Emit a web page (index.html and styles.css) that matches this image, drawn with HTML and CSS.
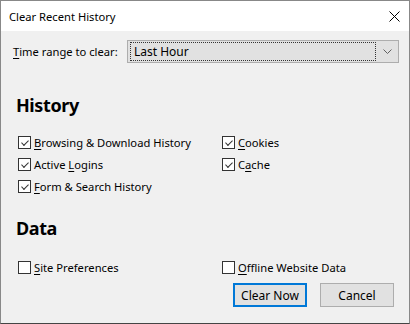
FILE: index.html
```html
<!DOCTYPE html>
<html lang="en">
<head>
    <meta charset="UTF-8">
    <title>Clear Recent History</title>
    <link rel="stylesheet" href="styles.css">
</head>
<body>
    <div class="dialog">
        <div class="titlebar">
            <span class="title">Clear Recent History</span>
            <svg class="close" width="11" height="11" viewBox="0 0 11 11">
                <path d="M0.5 0.5 L10.5 10.5 M10.5 0.5 L0.5 10.5" stroke="#000" stroke-width="1" fill="none"/>
            </svg>
        </div>

        <div class="content">
            <div class="range-row">
                <label class="range-label"><u>T</u>ime range to clear:</label>
                <div class="select">
                    <div class="select-focus">Last Hour</div>
                    <svg class="arrow" width="9" height="5" viewBox="0 0 9 5">
                        <path d="M0.5 0.5 L4.5 4.5 L8.5 0.5" stroke="#606060" stroke-width="1" fill="none"/>
                    </svg>
                </div>
            </div>

            <h2 class="section-title">History</h2>
            <div class="options">
                <div class="option"><span class="box checked"></span><span><u>B</u>rowsing &amp; Download History</span></div>
                <div class="option"><span class="box checked"></span><span><u>C</u>ookies</span></div>
                <div class="option"><span class="box checked"></span><span>Active <u>L</u>ogins</span></div>
                <div class="option"><span class="box checked"></span><span>C<u>a</u>che</span></div>
                <div class="option"><span class="box checked"></span><span><u>F</u>orm &amp; Search History</span></div>
            </div>

            <h2 class="section-title data-title">Data</h2>
            <div class="options data-options">
                <div class="option"><span class="box"></span><span><u>S</u>ite Preferences</span></div>
                <div class="option"><span class="box"></span><span><u>O</u>ffline Website Data</span></div>
            </div>

            <div class="buttons">
                <button class="btn default-btn">Clear Now</button>
                <button class="btn">Cancel</button>
            </div>
        </div>
    </div>
</body>
</html>
```

FILE: styles.css
```css
body {
    margin: 0;
    font-family: 'Noto Sans', sans-serif;
    font-size: 11.2px;
    color: #000;
}
.dialog {
    width: 410px;
    height: 324px;
    box-sizing: border-box;
    border: 1px solid #888;
    border-bottom-color: #444;
    background: #f0f0f0;
    display: flex;
    flex-direction: column;
}
.titlebar {
    height: 30px;
    background: white;
    display: flex;
    align-items: center;
    justify-content: space-between;
    padding: 0 9px 0 8px;
    font-size: 11.2px;
}
.close {
    display: block;
    margin-top: 1px;
}
.content {
    padding: 9px 10px 0 11px;
    flex: 1;
    display: flex;
    flex-direction: column;
}
u {
    text-decoration-thickness: 1px;
    text-underline-offset: 2px;
}
.range-row {
    display: flex;
    align-items: center;
    justify-content: space-between;
}
.range-label {
    padding-left: 1px;
    white-space: nowrap;
}
.select {
    width: 272px;
    height: 23px;
    box-sizing: border-box;
    border: 1px solid #adadad;
    background: #e1e1e1;
    display: flex;
    align-items: center;
    padding: 1px 4px 1px 2px;
}
.select-focus {
    flex: 1;
    height: 19px;
    box-sizing: border-box;
    border: 1px dotted #333;
    line-height: 17px;
    padding-left: 3px;
    font-size: 12px;
}
.arrow {
    display: block;
    margin-left: 7px;
    margin-right: 2px;
}
.section-title {
    font-size: 18px;
    font-weight: bold;
    letter-spacing: -0.4px;
    margin: 29px 0 0 4px;
    line-height: 26px;
}
.data-title {
    margin-top: 20px;
}
.options {
    display: grid;
    grid-template-columns: 204px 1fr;
    row-gap: 4px;
    margin-top: 15px;
    padding-left: 6px;
}
.data-options {
    margin-top: 17px;
}
.option {
    display: flex;
    align-items: center;
    height: 18px;
}
.box {
    width: 13px;
    height: 13px;
    box-sizing: border-box;
    border: 1px solid #333;
    background: white;
    margin-right: 3px;
    position: relative;
}
.box.checked::after {
    content: '';
    position: absolute;
    left: 2px;
    top: 0px;
    width: 6px;
    height: 3px;
    border-left: 1px solid #333;
    border-bottom: 1px solid #333;
    transform: translate(0.5px, 3px) rotate(-45deg);
}
.buttons {
    display: flex;
    justify-content: flex-end;
    gap: 13px;
    margin-top: 7px;
    margin-right: 5px;
}
.btn {
    width: 74px;
    height: 24px;
    font-family: 'Noto Sans', sans-serif;
    font-size: 12px;
    background: #e1e1e1;
    border: 1px solid #adadad;
    padding: 0;
    color: #000;
}
.default-btn {
    border: 2px solid #0078d7;
}
```
